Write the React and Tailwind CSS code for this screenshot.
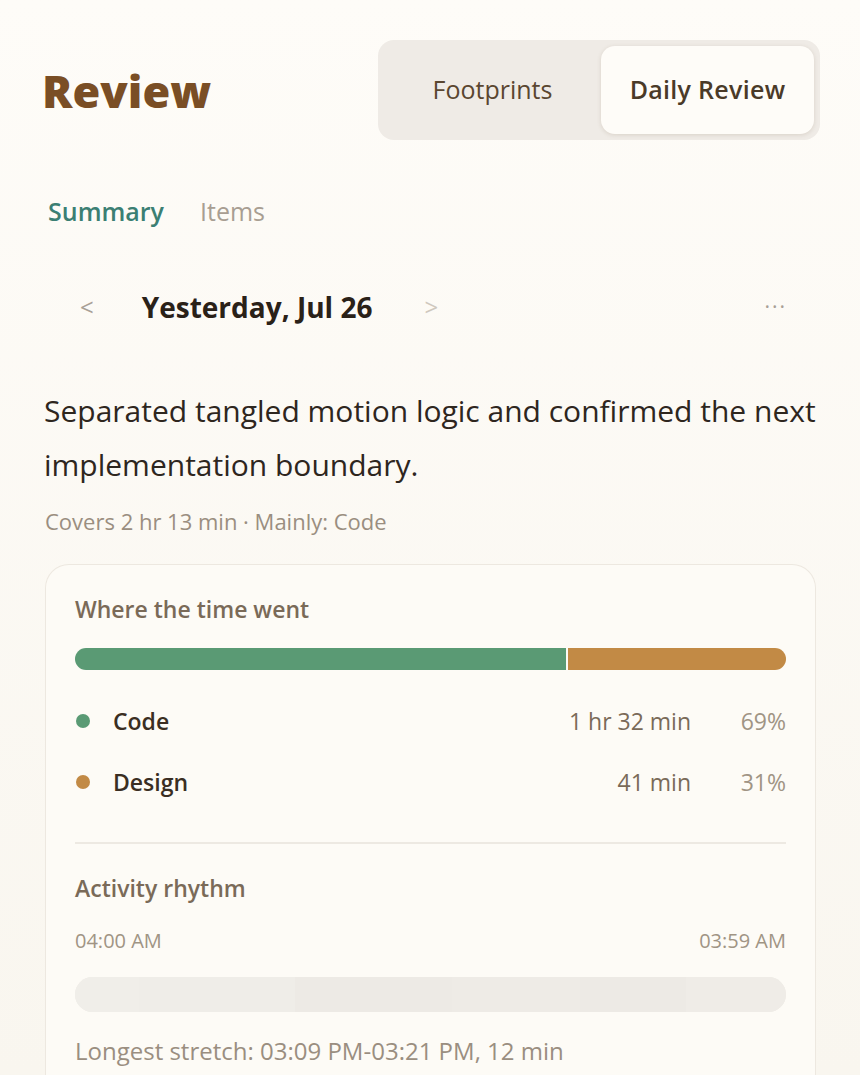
export default function App() {
  const font = { fontFamily: '"Open Sans", "Noto Sans", sans-serif' };
  return (
    <div className="min-h-[1075px] w-[860px] bg-gradient-to-b from-[#FEFCF8] to-[#F9F6EF] text-[#2E261E]" style={font}>
      <div className="px-[42px] pt-[40px]">
        <div className="flex items-center justify-between">
          <h1 className="text-[45px] font-extrabold text-[#7A4E25] leading-none">Review</h1>
          <div className="flex h-[100px] w-[442px] mr-[-2px] rounded-[16px] bg-[#EFEBE6] p-[6px]">
            <div className="flex flex-1 items-center justify-center text-[25px] text-[#5A4630]">Footprints</div>
            <div className="flex w-[213px] items-center justify-center rounded-[14px] bg-[#FEFCF8] text-[25px] font-semibold tracking-[0.3px] text-[#4A3A28] shadow-[0_1px_4px_rgba(120,100,70,0.18)]">Daily Review</div>
          </div>
        </div>

        <div className="mt-[55px] flex items-center gap-[36px] pl-[6px] text-[25px] leading-[32px]">
          <span className="font-semibold text-[#3B7F73]">Summary</span>
          <span className="text-[#A89E92]">Items</span>
        </div>

        <div className="mt-[60px] flex h-[40px] items-center">
          <span className="ml-[38px] text-[24px] text-[#A8A096]">&lt;</span>
          <span className="ml-[48px] text-[28px] font-bold text-[#2A2118]">Yesterday, Jul 26</span>
          <span className="ml-[52px] text-[24px] text-[#CFC8BE]">&gt;</span>
          <span className="ml-auto mr-[31px] text-[21px] tracking-[2px] text-[#A8A096]">···</span>
        </div>

        <p className="mt-[57px] pl-[2px] text-[30px] leading-[54px] text-[#2E261E]">
          Separated tangled motion logic and confirmed the next implementation boundary.
        </p>
        <p className="mt-[14px] pl-[3px] text-[22px] leading-[30px] text-[#9A8E80]">Covers 2 hr 13 min · Mainly: Code</p>

        <div className="mt-[28px] ml-[3px] mr-[2px] rounded-t-[24px] border border-b-0 border-[#EDE8E0] bg-[#FDFBF6] px-[29px] pt-[29px] pb-[10px]">
          <div className="text-[23px] leading-[30px] font-semibold text-[#7A6A58]">Where the time went</div>
          <div className="mt-[24px] flex h-[22px] overflow-hidden rounded-full">
            <div className="h-full bg-[#5A9A74]" style={{ width: '69%' }} />
            <div className="h-full w-[2px] bg-[#FDFBF6]" />
            <div className="h-full flex-1 bg-[#C28A45]" />
          </div>
          <div className="mt-[23px] flex h-[56px] items-center text-[23px]">
            <span className="ml-[1px] h-[14px] w-[14px] rounded-full bg-[#5A9A74]" />
            <span className="ml-[23px] font-semibold text-[#3A2E22]">Code</span>
            <span className="ml-auto text-[#7A6A58]">1 hr 32 min</span>
            <span className="w-[95px] text-right text-[#A09484]">69%</span>
          </div>
          <div className="mt-[5px] flex h-[56px] items-center text-[23px]">
            <span className="ml-[1px] h-[14px] w-[14px] rounded-full bg-[#C28A45]" />
            <span className="ml-[23px] font-semibold text-[#3A2E22]">Design</span>
            <span className="ml-auto text-[#7A6A58]">41 min</span>
            <span className="w-[95px] text-right text-[#A09484]">31%</span>
          </div>
          <div className="mt-[32px] h-[2px] bg-[#EDE9E2]" />
          <div className="mt-[29px] text-[23px] leading-[30px] font-semibold text-[#7A6A58]">Activity rhythm</div>
          <div className="mt-[26px] flex justify-between text-[20px] leading-[24px] text-[#A09484]">
            <span>04:00 AM</span>
            <span>03:59 AM</span>
          </div>
          <div className="mt-[24px] flex h-[35px] overflow-hidden rounded-full bg-[#EFECE6]">
            <div className="h-full w-[9%] bg-[#F0EEE9]" />
            <div className="h-full w-[22%] bg-[#EFEDE8]" />
            <div className="h-full w-[22%] bg-[#EDEAE5]" />
            <div className="h-full w-[18%] bg-[#EEEBE6]" />
            <div className="h-full w-[15%] bg-[#EDEAE5]" />
            <div className="h-full flex-1 bg-[#EFECE7]" />
          </div>
          <div className="mt-[24px] text-[24px] leading-[30px] text-[#9A8E80]">Longest stretch: 03:09 PM-03:21 PM, 12 min</div>
        </div>
      </div>
    </div>
  );
}
